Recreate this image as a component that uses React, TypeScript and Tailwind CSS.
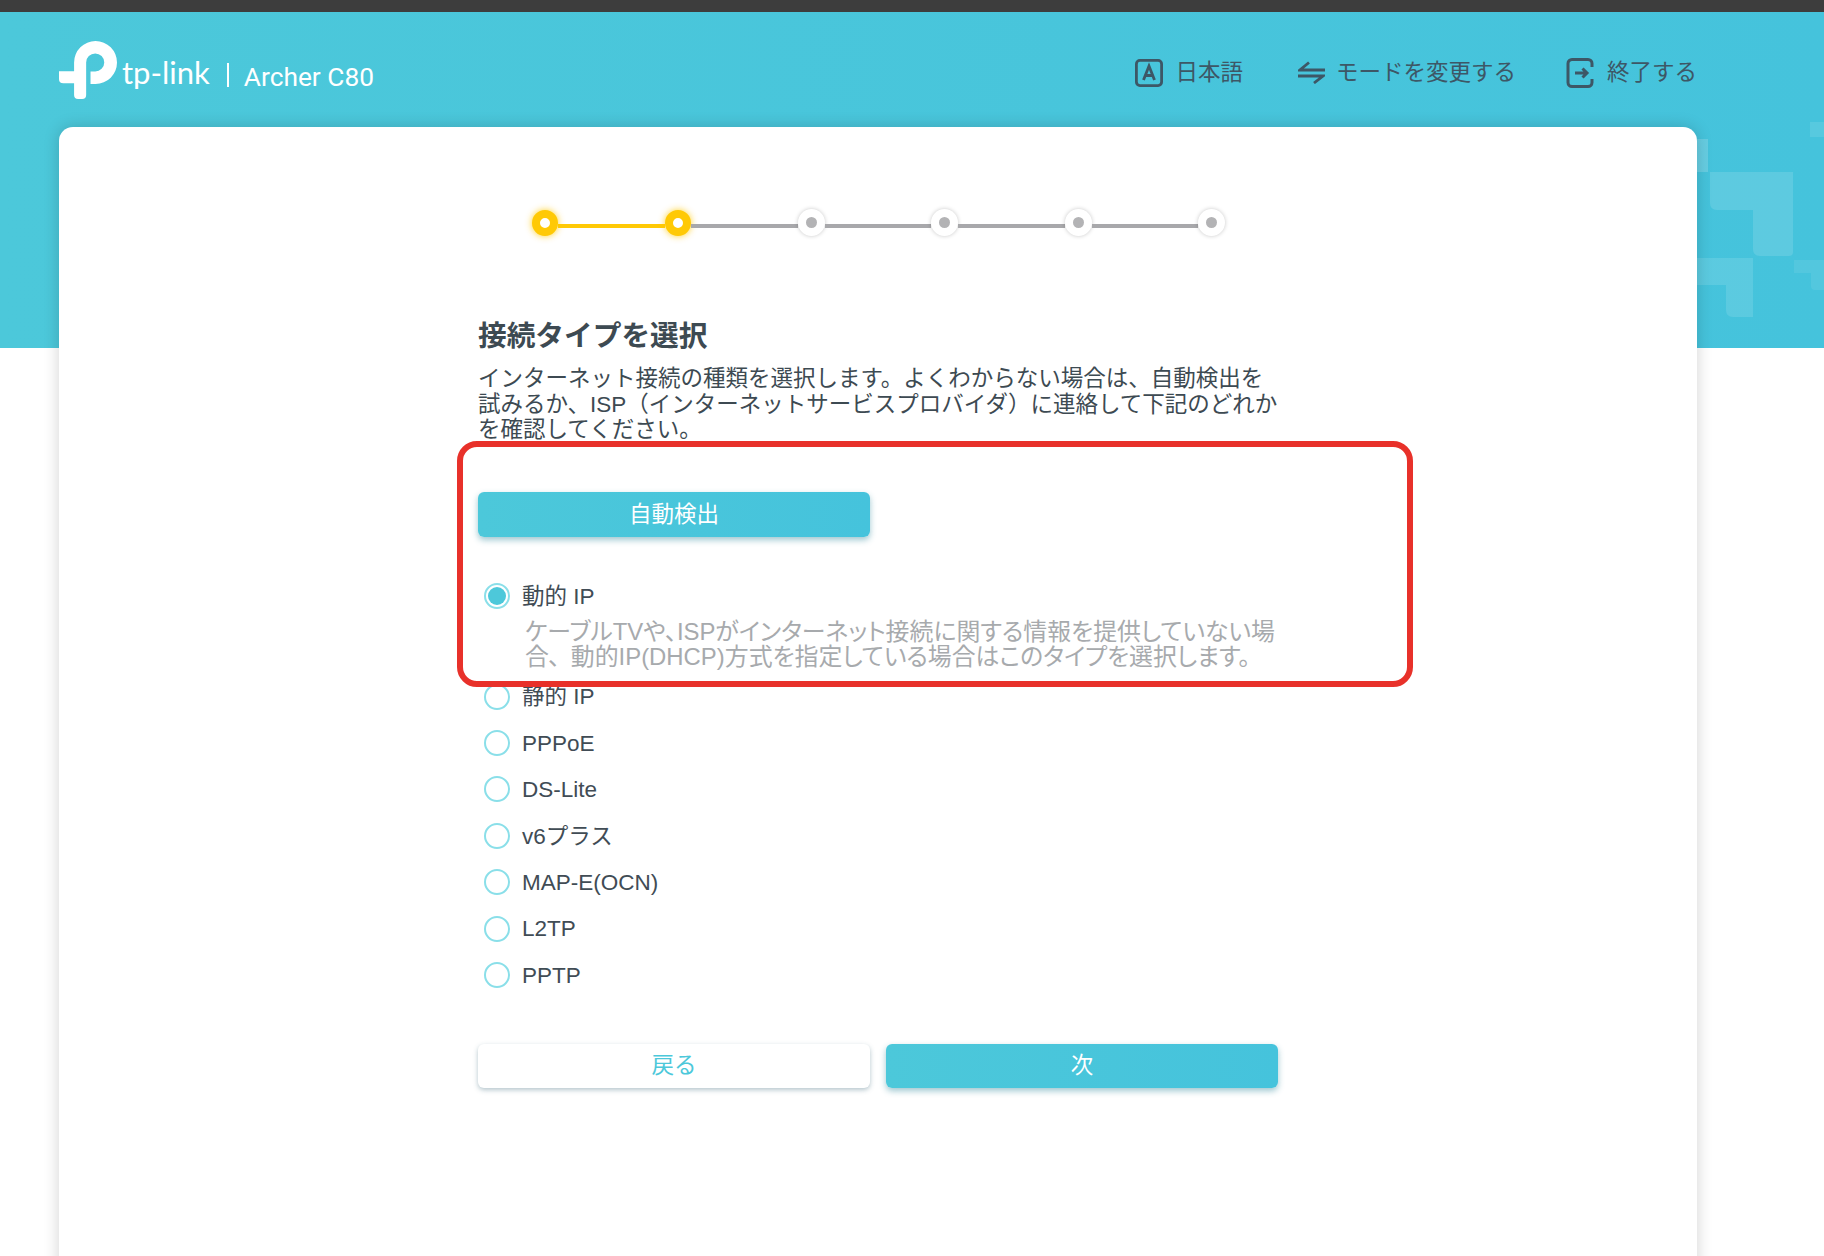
const steps = [true, true, false, false, false, false]
const options = ['静的 IP', 'PPPoE', 'DS-Lite', 'v6プラス', 'MAP-E(OCN)', 'L2TP', 'PPTP']

const Logo = () => (
	<svg viewBox="177 122 173 173" className="h-[58px] w-[58px]" fill="#fff">
		<path d="M177 212H222V186A64 64 0 1 1 286 250H271V213H285A27 27 0 1 0 258 186V283Q258 295 246 295H234Q222 295 222 283V248H190Q177 248 177 235Z" />
	</svg>
)

const LangIcon = () => (
	<svg viewBox="0 0 28 28" className="h-7 w-7" fill="none" stroke="#3d5766" strokeWidth="2.8">
		<rect x="1.4" y="1.4" width="25.2" height="25.2" rx="3.5" />
		<path d="M8.5 21L14 7L19.5 21M10.3 16.5H17.7" />
	</svg>
)

const SwapIcon = () => (
	<svg viewBox="0 0 27 23" className="h-[23px] w-[27px]" fill="none" stroke="#3d5766" strokeWidth="2.8">
		<path d="M27 9H2L11 1.5M0 15H25L16 22" />
	</svg>
)

const ExitIcon = () => (
	<svg viewBox="0 0 28 30" className="h-[30px] w-7" fill="none" stroke="#3d5766" strokeWidth="3">
		<path d="M26 9V5.5A4 4 0 0 0 22 1.5H6A4 4 0 0 0 2 5.5V24.5A4 4 0 0 0 6 28.5H22A4 4 0 0 0 26 24.5V21" />
		<path d="M9 15H21M16.5 10.5L21 15L16.5 19.5" />
	</svg>
)

const Pattern = () => (
	<svg className="absolute left-0 top-0 h-[336px] w-[1824px]" viewBox="0 12 1824 336">
		<path d="M1710 172H1793V252Q1793 256 1789 256H1760Q1753 256 1753 249V210H1717Q1710 210 1710 203Z" fill="#fff" fillOpacity="0.13" />
		<path d="M1697 139H1708V172H1697Z" fill="#fff" fillOpacity="0.18" />
		<path d="M1697 258H1753V317H1733Q1726 317 1726 310V285H1697Z" fill="#fff" fillOpacity="0.12" />
		<path d="M1794 260H1824V273H1824V290H1815Q1811 290 1811 286V273H1794Z" fill="#fff" fillOpacity="0.08" />
		<path d="M1810 122H1824V137H1810Z" fill="#fff" fillOpacity="0.1" />
	</svg>
)

const Step = ({ done }: { done: boolean }) =>
	done ? (
		<span className="h-[26px] w-[26px] shrink-0 rounded-full border-[8px] border-[#ffc905] bg-white shadow-[0_0_7px_rgba(255,200,0,0.85)]" />
	) : (
		<span className="flex h-[27px] w-[27px] shrink-0 items-center justify-center rounded-full bg-white shadow-[0_0_4px_rgba(0,0,0,0.22)]">
			<span className="h-[11px] w-[11px] rounded-full bg-[#b3b3b5]" />
		</span>
	)

const Radio = ({ checked, label }: { checked?: boolean; label: string }) => (
	<div className="flex items-center gap-3 pl-1.5 text-[22.5px] text-[#414c55]">
		<span className="flex h-[26px] w-[26px] items-center justify-center rounded-full border-2 border-[#8adfe9] bg-white">
			{checked && <span className="h-[18px] w-[18px] rounded-full bg-[#4dc8da]" />}
		</span>
		<span className="mt-[2px] leading-none">{label}</span>
	</div>
)

export default function App() {
	return (
		<div lang="ja" className="relative h-[1256px] overflow-hidden bg-white font-[family-name:'Liberation_Sans','Noto_Sans_CJK_JP',sans-serif]">
			<div className="h-3 bg-[#3d3d3d]" />

			<section className="relative h-[336px] bg-linear-to-r from-[#4cc8da] to-[#45c3dc]">
				<Pattern />
				<header className="relative flex items-start justify-between pl-[59px] pr-[127px] pt-[29px]">
					<div className="flex items-center">
						<Logo />
						<span className="ml-[5px] mt-[4px] font-[family-name:Lato,sans-serif] text-[31px] leading-none text-white">tp-link</span>
						<span className="ml-[17px] mt-[10px] h-6 w-0.5 bg-white" />
						<span className="ml-[15px] mt-[14px] font-[family-name:Roboto,sans-serif] text-[26.3px] leading-none text-white">Archer C80</span>
					</div>
					<nav className="mt-[15px] flex items-center text-[22.5px] text-[#3d5766]">
						<a href="#" className="flex items-center gap-3"><LangIcon />日本語</a>
						<a href="#" className="ml-[55px] flex items-center gap-[11px]"><SwapIcon />モードを変更する</a>
						<a href="#" className="ml-[50px] flex items-center gap-[13px]"><ExitIcon />終了する</a>
					</nav>
				</header>
			</section>

			<main className="relative ml-[59px] mr-[127px] mt-[-221px] h-[1300px] rounded-t-[14px] bg-white pt-[82px] shadow-[0_0_16px_rgba(0,0,0,0.18)]">
				<div className="mx-auto w-[800px]">
					<div className="ml-[54px] flex w-[693px] items-center">
						{steps.map((done, i) => (
							<div key={i} className={i === 0 ? 'flex items-center' : 'flex flex-1 items-center'}>
								{i > 0 && <span className={`mt-[7px] h-1 flex-1 ${done ? 'bg-[#ffc905]' : 'bg-[#a8a8ab]'}`} />}
								<Step done={done} />
							</div>
						))}
					</div>

					<h1 className="mt-[82px] text-[28.7px] font-bold leading-9 text-[#3d4a52]">接続タイプを選択</h1>
					<p className="mt-3 whitespace-nowrap text-[22.5px] leading-[25.6px] text-[#3d4a52]">
						インターネット接続の種類を選択します。よくわからない場合は、自動検出を<br />
						試みるか、ISP（インターネットサービスプロバイダ）に連絡して下記のどれか<br />
						を確認してください。
					</p>

					<button className="mt-[49px] block h-[45px] w-[392px] rounded-md bg-linear-to-r from-[#4cc8da] to-[#45c3dc] pt-px text-[22.5px] text-white shadow-[0_3px_6px_rgba(40,130,150,0.45)]">自動検出</button>

					<div className="mt-[46px]">
						<Radio checked label="動的 IP" />
						<p className="mt-[10px] whitespace-nowrap pl-[47px] text-[23.9px] leading-[25.6px] text-[#a7aaad] [font-feature-settings:'palt']">
							ケーブルTVや、ISPがインターネット接続に関する情報を提供していない場<br />
							<span className="tracking-[-1px] [font-feature-settings:normal]">合、</span>動的IP(DHCP)方式を指定している場合はこのタイプを選択します。
						</p>
					</div>

					<div className="mt-[3.5px]">
						{options.map(label => (
							<div key={label} className="flex h-[46.4px] items-center">
								<Radio label={label} />
							</div>
						))}
					</div>

					<div className="mt-[46px] flex gap-4">
						<button className="h-11 w-[392px] rounded-md bg-white text-[22.5px] text-[#4cc8da] shadow-[0_2px_5px_rgba(40,90,110,0.35)]">戻る</button>
						<button className="h-11 w-[392px] rounded-md bg-linear-to-r from-[#4cc8da] to-[#45c3dc] text-[22.5px] text-white shadow-[0_3px_6px_rgba(40,130,150,0.45)]">次</button>
					</div>
				</div>
			</main>

			{/* annotation frame drawn over the page */}
			<div className="absolute left-[457px] top-[441px] h-[246px] w-[956px] rounded-[20px] border-[6px] border-[#e8312a]" />
		</div>
	)
}
